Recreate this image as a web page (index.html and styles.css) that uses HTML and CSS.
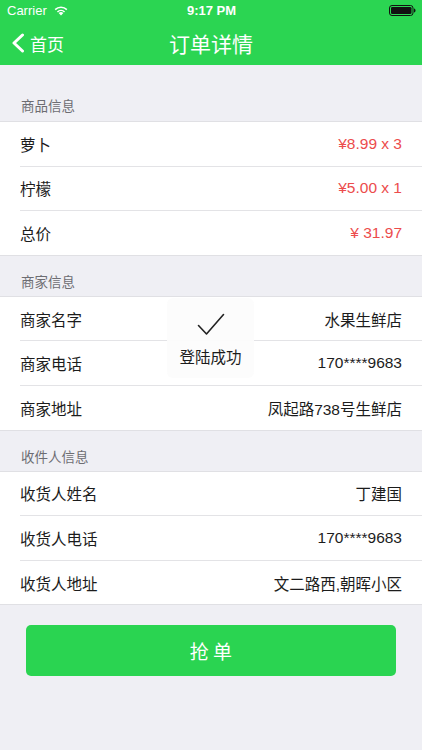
FILE: index.html
```html
<!DOCTYPE html>
<html lang="zh-CN">

<head>
    <meta charset="UTF-8">
    <meta name="viewport" content="width=device-width, initial-scale=1.0">
    <title>订单详情</title>
    <link rel="stylesheet" href="styles.css">
</head>

<body>
    <div class="top">
        <div class="status">
            <div class="status-left">
                <span>Carrier</span>
                <svg class="wifi" width="16" height="11" viewBox="0 0 16 11">
                    <path d="M8 10.6 L5.6 8.1 A3.4 3.4 0 0 1 10.4 8.1 Z" fill="#fff"/>
                    <path d="M3.9 6.4 A5.8 5.8 0 0 1 12.1 6.4 L11 7.5 A4.3 4.3 0 0 0 5 7.5 Z" fill="#fff"/>
                    <path d="M1.6 4.1 A9 9 0 0 1 14.4 4.1 L13.3 5.2 A7.5 7.5 0 0 0 2.7 5.2 Z" fill="#fff"/>
                </svg>
            </div>
            <div class="status-time">9:17 PM</div>
            <div class="status-right">
                <svg width="27" height="11" viewBox="0 0 27 11">
                    <rect x="0.5" y="0.5" width="23.5" height="10" rx="2.5" fill="none" stroke="#111" stroke-width="1"/>
                    <rect x="2" y="2" width="20.5" height="7" rx="1.3" fill="#111"/>
                    <path d="M25 3.5 Q26.5 3.5 26.5 5.5 Q26.5 7.5 25 7.5 Z" fill="#111"/>
                </svg>
            </div>
        </div>
        <div class="navbar">
            <div class="back">
                <svg width="14" height="20" viewBox="0 0 14 20">
                    <path d="M11.5 2 L3 10 L11.5 18" fill="none" stroke="#fff" stroke-width="3" stroke-linecap="round" stroke-linejoin="round"/>
                </svg>
                <span>首页</span>
            </div>
            <div class="title">订单详情</div>
        </div>
    </div>

    <div class="section-head first">商品信息</div>
    <div class="group">
        <div class="row"><span>萝卜</span><span class="price">¥8.99 x 3</span></div>
        <div class="row"><span>柠檬</span><span class="price">¥5.00 x 1</span></div>
        <div class="row"><span>总价</span><span class="price">¥ 31.97</span></div>
    </div>

    <div class="section-head">商家信息</div>
    <div class="group">
        <div class="row"><span>商家名字</span><span>水果生鲜店</span></div>
        <div class="row"><span>商家电话</span><span>170****9683</span></div>
        <div class="row"><span>商家地址</span><span>凤起路738号生鲜店</span></div>
    </div>

    <div class="section-head">收件人信息</div>
    <div class="group">
        <div class="row"><span>收货人姓名</span><span>丁建国</span></div>
        <div class="row"><span>收货人电话</span><span>170****9683</span></div>
        <div class="row"><span>收货人地址</span><span>文二路西,朝晖小区</span></div>
    </div>

    <div class="actions">
        <button class="grab">抢 单</button>
    </div>

    <!-- 提示框 -->
    <div class="toast">
        <svg width="28" height="24" viewBox="0 0 28 24">
            <path d="M1.5 12.5 L9.5 21 L26.5 1.5" fill="none" stroke="#222" stroke-width="1.6" stroke-linecap="round" stroke-linejoin="round"/>
        </svg>
        <div>登陆成功</div>
    </div>
</body>

</html>
```

FILE: styles.css
```css
body {
    margin: 0;
    background-color: #efeff4;
    font-family: "Liberation Sans", "Noto Sans CJK SC", sans-serif;
    color: #1c1c1c;
    position: relative;
    min-height: 750px;
}

.top {
    background-color: #2bd552;
    color: #fff;
    height: 65px;
}

.status {
    height: 21px;
    display: flex;
    align-items: center;
    justify-content: space-between;
    padding: 0 6px 0 7px;
    font-size: 13px;
}

.status-left {
    display: flex;
    align-items: center;
    gap: 6px;
    width: 100px;
}

.status-time {
    font-weight: bold;
    font-size: 13px;
    color: #fff;
}

.status-right {
    width: 100px;
    display: flex;
    justify-content: flex-end;
}

.navbar {
    height: 44px;
    display: flex;
    align-items: center;
    position: relative;
}

.back {
    display: flex;
    align-items: center;
    gap: 5px;
    padding-left: 11px;
    font-size: 17px;
}

.back span {
    font-family: "Noto Sans CJK SC", sans-serif;
}

.title {
    position: absolute;
    left: 0;
    right: 0;
    text-align: center;
    font-size: 21px;
    font-family: "Noto Sans CJK SC", sans-serif;
    pointer-events: none;
}

.section-head {
    height: 40px;
    box-sizing: border-box;
    padding: 0 21px 5px;
    display: flex;
    align-items: flex-end;
    font-size: 13.5px;
    color: #6d6d72;
}

.section-head.first {
    height: 56px;
    padding-bottom: 6px;
}

.group {
    background-color: #fff;
    border-top: 1px solid #e0e0e4;
    border-bottom: 1px solid #e0e0e4;
}

.row {
    height: 43.6px;
    margin-left: 20px;
    padding-right: 20px;
    display: flex;
    align-items: center;
    justify-content: space-between;
    font-size: 15.5px;
    border-bottom: 1px solid #e3e3e6;
}

.row:last-child {
    border-bottom: none;
}

.price {
    color: #ec4c4c;
}

.actions {
    padding: 20px 26px 0;
}

.grab {
    width: 100%;
    height: 51px;
    border: none;
    border-radius: 5px;
    background-color: #2ad451;
    color: #fff;
    font-size: 19px;
    font-family: "Noto Sans CJK SC", sans-serif;
    cursor: pointer;
}

.toast {
    position: absolute;
    left: 167px;
    top: 298px;
    width: 87px;
    height: 80px;
    border-radius: 6px;
    background-color: rgba(252, 252, 252, 0.96);
    display: flex;
    flex-direction: column;
    align-items: center;
    justify-content: center;
    gap: 8px;
    font-size: 15.5px;
    font-family: "Noto Sans CJK SC", sans-serif;
    color: #1c1c1c;
}

.toast svg {
    margin-top: 4px;
}
```
